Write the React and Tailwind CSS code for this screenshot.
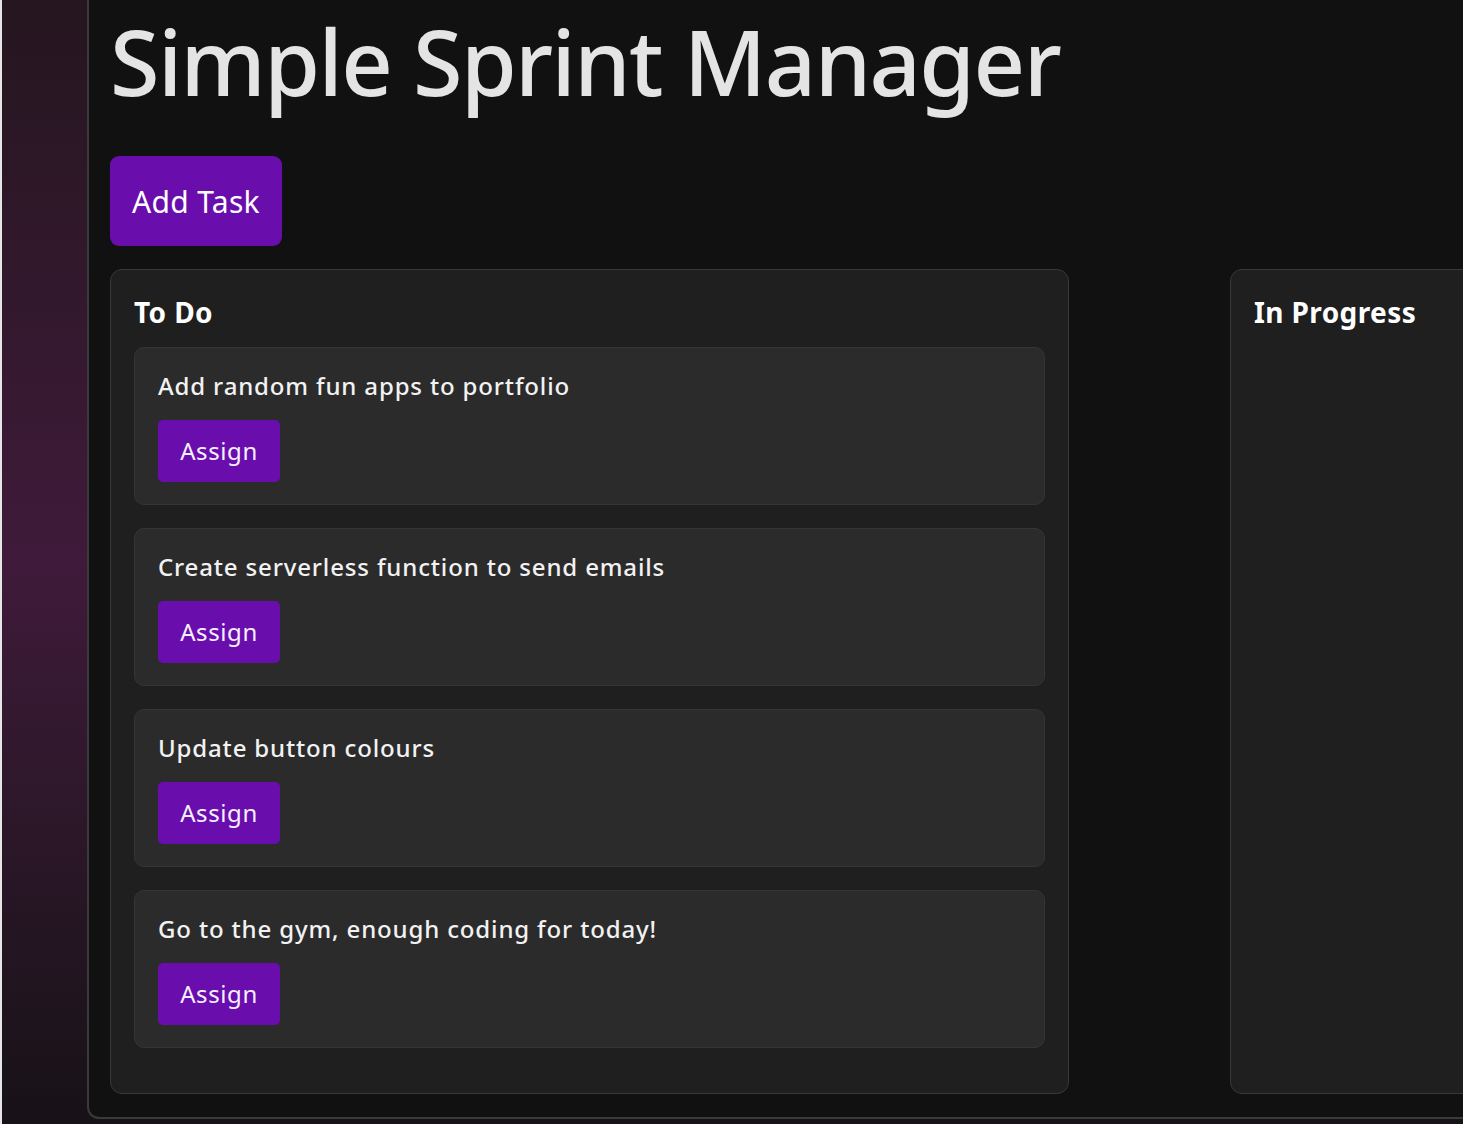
import React from 'react';

const tasks = [
  'Add random fun apps to portfolio',
  'Create serverless function to send emails',
  'Update button colours',
  'Go to the gym, enough coding for today!',
];

function TaskCard({ title }) {
  return (
    <div className="rounded-[10px] border border-[#353535] bg-[#2b2b2b] px-[23px] pt-[22px] pb-[22px] mb-[23px]">
      <p className="text-[24px] leading-[32px] font-medium text-[#f2f2f2] tracking-[0.85px]">{title}</p>
      <button className="mt-[18px] h-[62px] w-[122px] rounded-[5px] bg-[#6a0dad] text-[24px] tracking-[0.6px] text-[#f5f0ff]">
        Assign
      </button>
    </div>
  );
}

function Column({ title, items }) {
  return (
    <div className="w-[959px] shrink-0 h-[825px] rounded-[12px] border border-[#383838] bg-[#1f1f1f] px-[23px] pt-[24px]">
      <h2 className="text-[28px] leading-[36px] font-bold text-white tracking-[0.4px] mb-[17px]">{title}</h2>
      {items.map((t) => (
        <TaskCard key={t} title={t} />
      ))}
    </div>
  );
}

export default function App() {
  return (
    <div
      className="h-[1124px] w-full overflow-hidden flex bg-gradient-to-b from-[#25161f] via-[#3f1a3a] to-[#171217]"
      style={{ fontFamily: '"Noto Sans", Lato, sans-serif' }}
    >
      <div className="w-[2px] shrink-0 bg-[#e6e6e6]" />
      <div className="w-[85px] shrink-0" />
      <main className="flex-1 h-[1119px] min-w-0 overflow-hidden rounded-bl-[12px] border-l-2 border-b-2 border-[#3a3a3a] bg-[#111111] pl-[21px]">
        <h1 className="text-[90px] leading-[122px] font-medium text-[#e4e4e4] tracking-[-1.6px]">
          Simple Sprint Manager
        </h1>
        <button className="mt-[34px] h-[90px] w-[172px] rounded-[9px] bg-[#6a0dad] text-[30px] tracking-[0.3px] text-white">
          Add Task
        </button>
        <div className="mt-[23px] flex gap-[161px]">
          <Column title="To Do" items={tasks} />
          <Column title="In Progress" items={[]} />
        </div>
      </main>
    </div>
  );
}
